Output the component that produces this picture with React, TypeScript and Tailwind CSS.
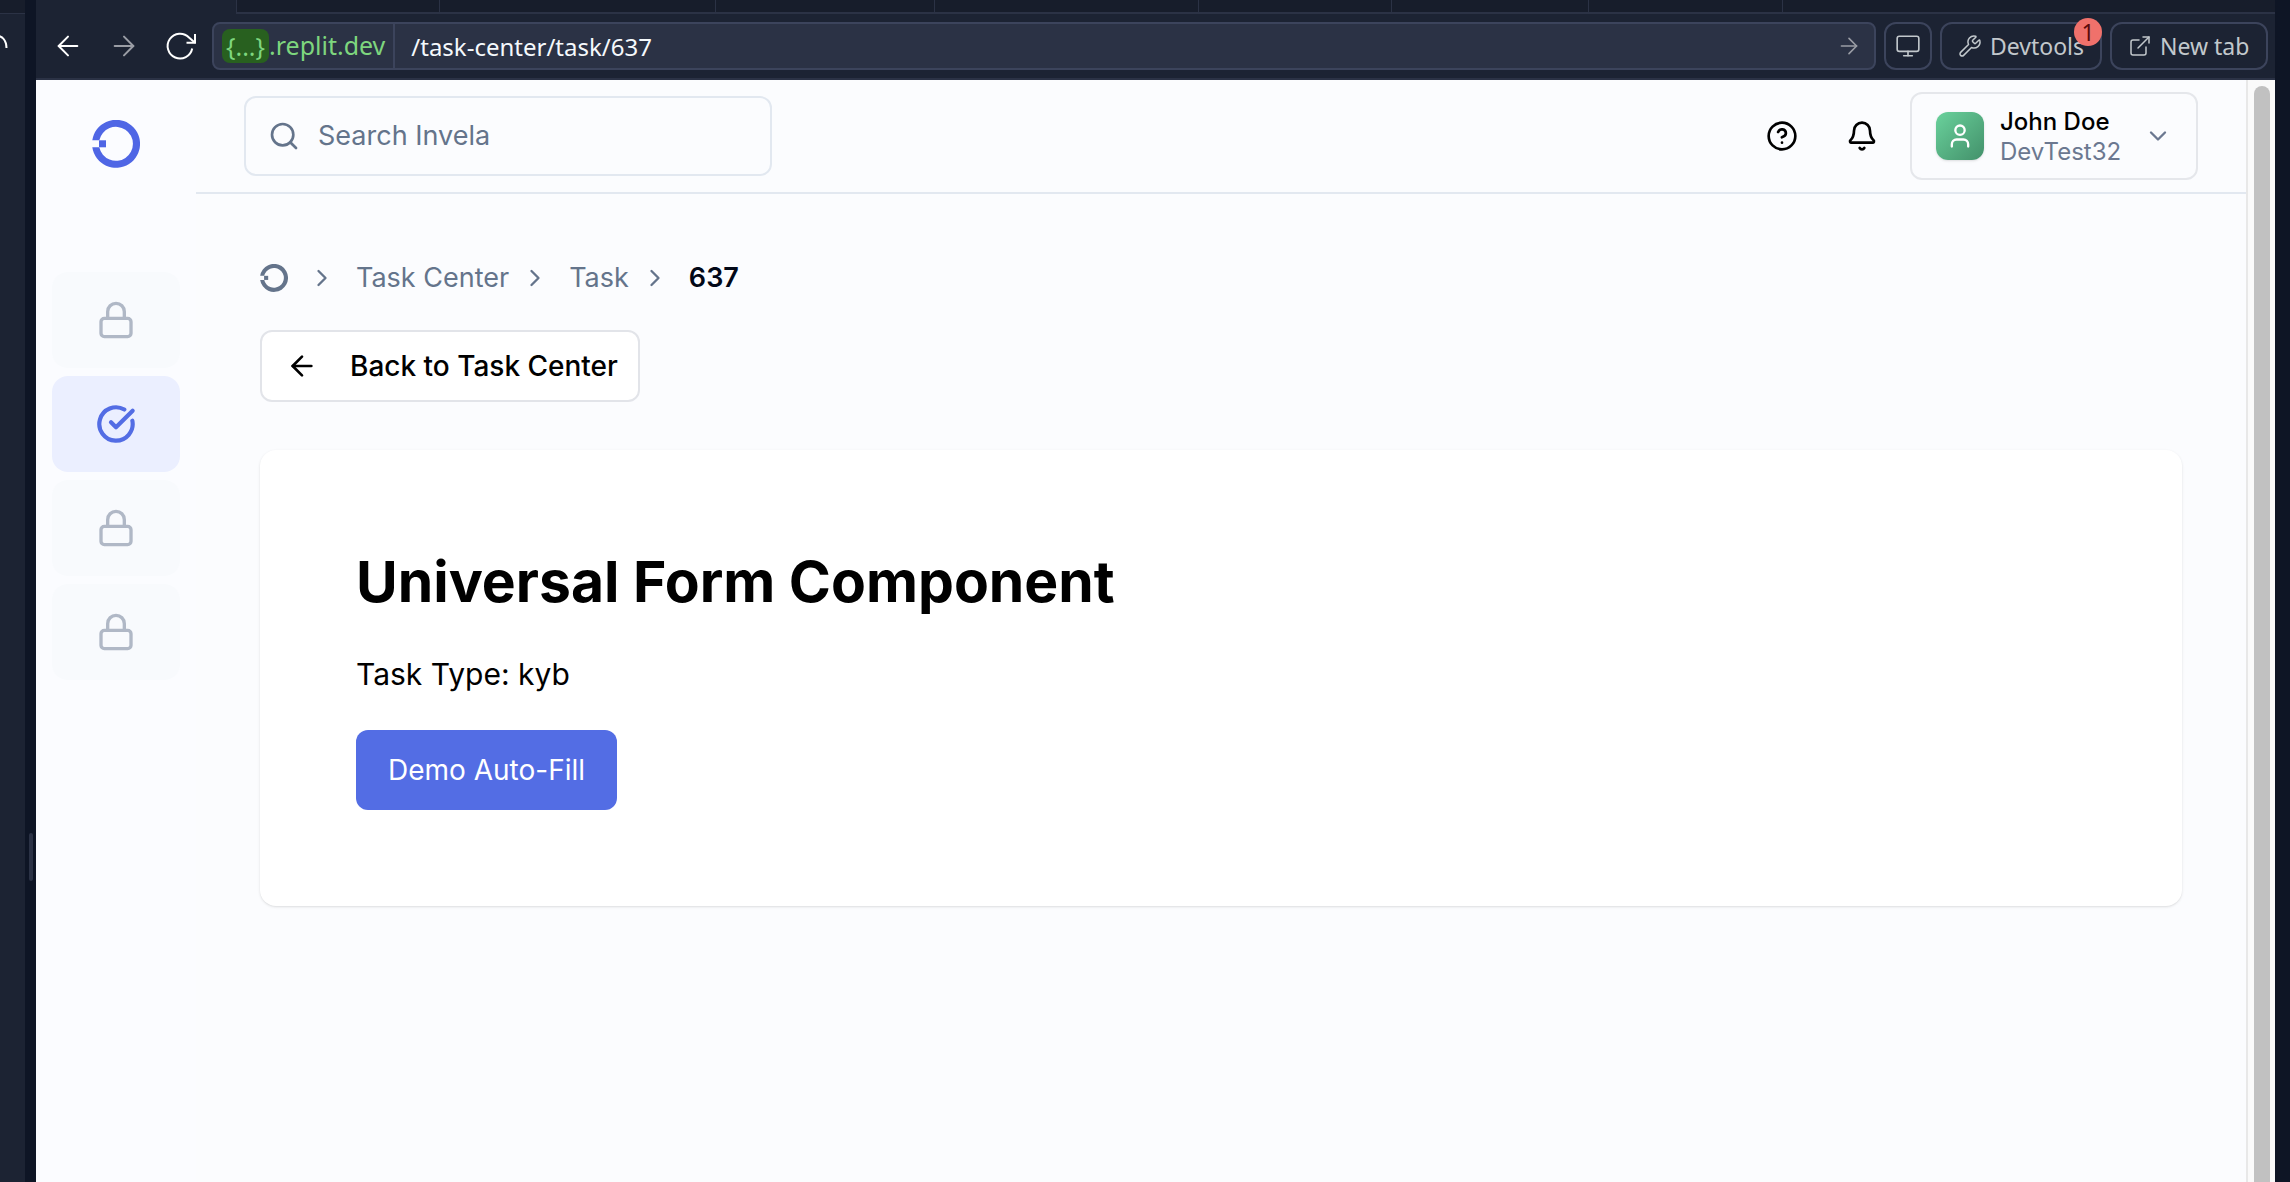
import React from "react";
import {
  ArrowLeft,
  ArrowRight,
  Bell,
  ChevronDown,
  ChevronRight,
  CircleCheckBig,
  CircleHelp,
  ExternalLink,
  Lock,
  Monitor,
  Search,
  User,
  Wrench,
} from "lucide-react";

const tabs = [
  { id: "a", width: "w-[203px]" },
  { id: "b", width: "w-[276px]" },
  { id: "c", width: "w-[219px]" },
  { id: "d", width: "w-[264px]" },
  { id: "e", width: "w-[193px]" },
  { id: "f", width: "w-[197px]" },
  { id: "g", width: "w-[194px]" },
];

function Logo({ className }: { className: string }) {
  return (
    <svg viewBox="0 0 48 48" className={className} fill="currentColor" aria-hidden="true">
      <path d="M.3 20.3A24 24 0 1 1 .3 27.3H7.3A17 17 0 1 0 7.3 20.3Z" />
      <rect x="7" y="20.3" width="7" height="7" />
    </svg>
  );
}

function ReloadIcon() {
  return (
    <svg viewBox="0 0 32 32" className="h-8 w-8" fill="none" stroke="currentColor" strokeWidth="2" aria-hidden="true">
      <path d="M28.200 18.500A12.400 12.400 0 1 1 25 7.500L31 12.800" />
      <path d="M31 4V12.800H22.500" />
    </svg>
  );
}

function TabStrip() {
  return (
    <div className="flex h-[14px] shrink-0 bg-[#1c2333]">
      <div className="w-[200px] shrink-0" />
      <div className="flex min-w-0 flex-1 border-b-2 border-l border-[#2b3245] bg-[#171d2b]">
        {tabs.map((tab) => (
          <div key={tab.id} className={`${tab.width} shrink-0 border-r border-[#2b3245]`} />
        ))}
      </div>
    </div>
  );
}

function BrowserBar() {
  return (
    <div className="flex h-[66px] shrink-0 items-center gap-2 border-b-2 border-[#2b3245] bg-[#1c2333] pr-[7px] font-['Noto_Sans','Open_Sans',sans-serif] text-[23px] text-[#c2c8cc]">
      <div className="flex w-[168px] shrink-0 items-center gap-6 pl-4 text-white">
        <button aria-label="Go back"><ArrowLeft size={32} strokeWidth={1.5} /></button>
        <button aria-label="Go forward" className="text-[#9a9da5]"><ArrowRight size={32} strokeWidth={1.5} /></button>
        <button aria-label="Reload"><ReloadIcon /></button>
      </div>
      <div className="flex h-12 min-w-0 flex-1 items-center rounded-lg border-2 border-[#3c445c] bg-[#2b3245] text-2xl text-[#f5f9fc]">
        <button className="flex h-full shrink-0 items-center border-r-2 border-[#3c445c] px-2 text-[25px] text-[#7ed67e]">
          <span className="flex w-[47px] justify-center rounded-lg bg-[#28601f] leading-[34px]">{"{...}"}</span>
          <span>.replit.dev</span>
        </button>
        <input aria-label="Path" defaultValue="/task-center/task/637" className="h-full min-w-0 flex-1 bg-transparent px-4 outline-none" />
        <button aria-label="Go" className="px-3 text-[#9a9da5]"><ArrowRight size={26} strokeWidth={1.5} /></button>
      </div>
      <button aria-label="Screen size" className="flex h-12 w-12 items-center justify-center rounded-xl border-2 border-[#3c445c]">
        <Monitor size={26} strokeWidth={1.5} />
      </button>
      <button className="relative flex h-12 w-[162px] items-center gap-2 rounded-xl border-2 border-[#3c445c] pl-4">
        <Wrench size={24} strokeWidth={1.5} />
        Devtools
        <span className="absolute -top-[6px] -right-[2px] flex h-7 w-7 items-center justify-center rounded-full bg-[#f0716b] text-[#5c0c0c]">1</span>
      </button>
      <button className="flex h-12 w-[158px] items-center gap-2 rounded-xl border-2 border-[#3c445c] pl-4">
        <ExternalLink size={24} strokeWidth={1.5} />
        New tab
      </button>
    </div>
  );
}

const navItems = [
  { label: "Dashboard (locked)", locked: true },
  { label: "Task Center", locked: false },
  { label: "Network (locked)", locked: true },
  { label: "Insights (locked)", locked: true },
];

function Sidebar() {
  return (
    <aside className="flex w-40 shrink-0 flex-col items-center bg-[#fbfcff] pt-10">
      <a href="#home" aria-label="Invela home" className="text-[#4f66e5]"><Logo className="h-12 w-12" /></a>
      <nav className="mt-[104px] flex w-full flex-col gap-2 px-4">
        {navItems.map((item) => (
          <a
            key={item.label}
            href="#nav"
            aria-label={item.label}
            className={
              item.locked
                ? "flex h-24 items-center justify-center rounded-2xl bg-[#f8fafd] text-[#b0b8c6]"
                : "flex h-24 items-center justify-center rounded-2xl bg-[#ebefff] text-[#536de4]"
            }
          >
            {item.locked ? <Lock size={40} /> : <CircleCheckBig size={40} strokeWidth={2.5} />}
          </a>
        ))}
      </nav>
    </aside>
  );
}

function Header() {
  return (
    <header className="flex h-[114px] shrink-0 items-center border-b-2 border-[#e2e8f0] pr-12 pl-12">
      <label className="flex h-20 w-[528px] items-center gap-[18px] rounded-xl border-2 border-[#e2e8f0] px-[22px]">
        <Search size={32} className="shrink-0 text-[#64748b]" />
        <input aria-label="Search" placeholder="Search Invela" className="min-w-0 flex-1 bg-transparent text-[27px] outline-none placeholder:text-[#64748b]" />
      </label>
      <div className="ml-auto flex items-center gap-12">
        <button aria-label="Help"><CircleHelp size={32} /></button>
        <button aria-label="Notifications"><Bell size={32} /></button>
        <button className="-ml-4 flex h-[88px] w-72 items-center rounded-xl border-2 border-[#e5e7eb] px-6 text-left text-2xl">
          <span className="mr-4 flex h-12 w-12 items-center justify-center rounded-xl bg-linear-to-br from-[#6ad29c] to-[#43916b] text-white shadow-sm">
            <User size={28} />
          </span>
          <span className="flex-1 pt-[2px] leading-[30px]">
            <span className="block font-medium">John Doe</span>
            <span className="block text-[#6b7890]">DevTest32</span>
          </span>
          <ChevronDown size={28} className="text-[#6b7890]" />
        </button>
      </div>
    </header>
  );
}

function Breadcrumb() {
  return (
    <nav aria-label="Breadcrumb" className="flex h-10 items-center text-[27px] text-[#64748b]">
      <a href="#home" aria-label="Home"><Logo className="h-7 w-7" /></a>
      <ChevronRight size={28} className="mr-5 ml-5" />
      <a href="#tasks">Task Center</a>
      <ChevronRight size={28} className="mr-5 ml-3" />
      <a href="#task">Task</a>
      <ChevronRight size={28} className="mr-5 ml-3" />
      <span aria-current="page" className="font-semibold text-[#020817]">637</span>
    </nav>
  );
}

export default function App() {
  return (
    <div className="flex h-screen overflow-hidden bg-[#0e1525] font-[Inter,sans-serif] text-black">
      <div className="flex w-[25px] shrink-0 flex-col bg-[#1c2333]">
        <div className="h-[14px] border-b border-[#2b3245] bg-[#171d2b]" />
        <svg viewBox="0 0 25 66" className="h-[66px] w-[25px]" fill="none" stroke="#fff" strokeWidth="2" aria-hidden="true">
          <path d="M-4 21.500C3 22 6.500 27 6.500 34" />
        </svg>
      </div>
      <div className="flex w-[11px] shrink-0 items-end justify-center pb-[301px]">
        <div className="h-12 w-1 rounded-full bg-[#2b3245]" />
      </div>
      <div className="mr-[15px] flex min-w-0 flex-1 flex-col">
        <TabStrip />
        <BrowserBar />
        <div className="flex min-h-0 flex-1 bg-[#fbfcfe]">
          <Sidebar />
          <div className="flex min-w-0 flex-1 flex-col">
            <Header />
            <main className="flex flex-col items-start px-16 pt-16">
              <Breadcrumb />
              <button className="mt-8 flex h-[72px] items-center rounded-xl border-2 border-[#e2e4e9] bg-white pr-5 pl-6 text-[28px] font-medium">
                <ArrowLeft size={32} className="mr-8" />
                Back to Task Center
              </button>
              <section className="mt-12 w-full rounded-2xl bg-white p-24 shadow-sm">
                <h1 className="text-[57px] leading-[72px] font-bold">Universal Form Component</h1>
                <p className="mt-8 text-[30px] leading-[48px]">Task Type: kyb</p>
                <button className="mt-8 h-20 rounded-xl bg-[#536de4] px-8 text-[28px] text-white">Demo Auto-Fill</button>
              </section>
            </main>
          </div>
          <div className="flex w-[29px] shrink-0 justify-center border-l-2 border-[#e8e8e8] bg-[#fafafa] pt-[6px]" aria-hidden="true">
            <div className="w-4 rounded-t-full bg-[#c1c1c1]" />
          </div>
        </div>
      </div>
    </div>
  );
}
